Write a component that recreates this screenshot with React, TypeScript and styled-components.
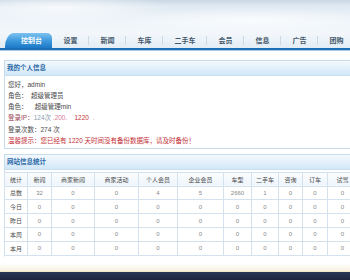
import React, { FC } from "react"
import { styled, createGlobalStyle } from "styled-components"

const GlobalStyle = createGlobalStyle`
  html, body {
    margin: 0;
    padding: 0;
    background: #ffffff;
    overflow: hidden;
  }
  body {
    font-family: "Liberation Sans", "Noto Sans CJK SC", sans-serif;
  }
`

const TABS = ["控制台", "设置", "新闻", "车库", "二手车", "会员", "信息", "广告", "团购"]

const COLUMNS = [
  { label: "统计", width: 23 },
  { label: "新闻", width: 24 },
  { label: "商家新闻", width: 43 },
  { label: "商家活动", width: 44 },
  { label: "个人会员", width: 39 },
  { label: "企业会员", width: 46 },
  { label: "车型", width: 28 },
  { label: "二手车", width: 27 },
  { label: "咨询", width: 24 },
  { label: "订车", width: 25 },
  { label: "试驾", width: 30 },
]

const ROWS = [
  { name: "总数", values: [32, 0, 0, 4, 5, 2660, 1, 0, 0, 0] },
  { name: "今日", values: [0, 0, 0, 0, 0, 0, 0, 0, 0, 0] },
  { name: "昨日", values: [0, 0, 0, 0, 0, 0, 0, 0, 0, 0] },
  { name: "本周", values: [0, 0, 0, 0, 0, 0, 0, 0, 0, 0] },
  { name: "本月", values: [0, 0, 0, 0, 0, 0, 0, 0, 0, 0] },
]

const App: FC = (): JSX.Element => {
  return (
    <Page>
      <GlobalStyle />

      <Header>
        <Nav>
          {TABS.map((t, i) => (
            <Tab key={t} $active={i === 0}>
              {t}
            </Tab>
          ))}
        </Nav>
      </Header>

      <Content>
        <Panel>
          <PanelTitle>我的个人信息</PanelTitle>
          <InfoList>
            <li>您好，admin</li>
            <li>角色：&nbsp;&nbsp;超级管理员</li>
            <li>角色：&nbsp;&nbsp;&nbsp;&nbsp;超级管理min</li>
            <li>
              <Tone $c="#9a4556">登录IP：</Tone>
              <Tone $c="#8c9db0">124次</Tone>
              <Tone $c="#d67a98">&nbsp;.200.</Tone>
              <Tone $c="#c53a3a">&nbsp;&nbsp;&nbsp;&nbsp;1220</Tone>
              <Tone $c="#aaa">&nbsp;&nbsp;.</Tone>
            </li>
            <li>登录次数：274 次</li>
            <li className="warn">
              温馨提示：您已经有 1220 天时间没有备份数据库，请及时备份！
            </li>
          </InfoList>
        </Panel>

        <Panel $gap>
          <PanelTitle>网站信息统计</PanelTitle>
          <StatsTable>
            <colgroup>
              {COLUMNS.map((c) => (
                <col key={c.label} style={{ width: c.width }} />
              ))}
            </colgroup>
            <thead>
              <tr>
                {COLUMNS.map((c) => (
                  <th key={c.label}>{c.label}</th>
                ))}
              </tr>
            </thead>
            <tbody>
              {ROWS.map((r) => (
                <tr key={r.name}>
                  <td className="name">{r.name}</td>
                  {r.values.map((v, i) => (
                    <td key={i}>{v}</td>
                  ))}
                </tr>
              ))}
            </tbody>
          </StatsTable>
        </Panel>
      </Content>

      <Shade />
      <Footer />
    </Page>
  )
}

const Page = styled.div`
  width: 350px;
  height: 280px;
  display: flex;
  flex-direction: column;
  overflow: hidden;
`

const Header = styled.div`
  height: 48px;
  flex: none;
  display: flex;
  align-items: flex-end;
  background:
    radial-gradient(ellipse 160px 22px at 60px 8px, rgba(255, 255, 255, 0.75), rgba(255, 255, 255, 0) 70%),
    radial-gradient(ellipse 200px 18px at 250px 20px, rgba(255, 255, 255, 0.7), rgba(255, 255, 255, 0) 70%),
    linear-gradient(#c9d7e3 0px, #dfe9f2 6px, #eef4f9 22px, #f3f7fb 33px, #e3edf5 48px);
  border-bottom: 2px solid #1f6fb6;
  box-shadow: 0 1px 0 #a9cbe8;
`

const Nav = styled.ul`
  display: flex;
  align-items: flex-end;
  margin: 0;
  padding: 0 0 0 5px;
  list-style: none;
  height: 15px;
`

const Tab = styled.li<{ $active?: boolean }>`
  position: relative;
  height: 15px;
  line-height: 15px;
  font-size: 7px;
  font-weight: bold;
  white-space: nowrap;
  color: ${(p) => (p.$active ? "#ffffff" : "#46596c")};
  padding: ${(p) => (p.$active ? "0 10px 0 16px" : "0 11.5px")};
  background: ${(p) =>
    p.$active ? "linear-gradient(#7cc2f0, #3b97dc 55%, #1d78c6)" : "transparent"};
  border-radius: ${(p) => (p.$active ? "9px 5px 0 0 / 14px 5px 0 0" : "0")};

  &::after {
    content: "";
    position: absolute;
    right: 0;
    top: 3px;
    width: 1px;
    height: 9px;
    background: ${(p) => (p.$active ? "transparent" : "#cbd9e5")};
  }
`

const Content = styled.div`
  padding: 10px 0 0 4px;
  display: flex;
  flex-direction: column;
`

const Panel = styled.section<{ $gap?: boolean }>`
  width: 360px;
  margin-top: ${(p) => (p.$gap ? "5px" : "0")};
  border: 1px solid ${(p) => (p.$gap ? "transparent" : "#c8ddec")};
  border-left-color: #c8ddec;
  border-top-color: #c8ddec;
`

const PanelTitle = styled.h3`
  margin: 0;
  height: 14px;
  line-height: 14px;
  padding-left: 2px;
  font-size: 6.5px;
  font-weight: bold;
  color: #2a68a8;
  background: linear-gradient(#f3f9fd, #d2e8f8);
  border-bottom: 1px solid #c8ddec;
`

const InfoList = styled.ul`
  margin: 0;
  padding: 2.5px 3px 1.5px;
  list-style: none;

  > li {
    height: 11.3px;
    line-height: 11.3px;
    font-size: 6.5px;
    color: #4a4a4a;
    white-space: nowrap;
  }

  > li.warn {
    color: #c23036;
  }
`

const Tone = styled.span<{ $c: string }>`
  color: ${(p) => p.$c};
`

const StatsTable = styled.table`
  margin-top: 2px;
  margin-left: -1px;
  border-collapse: collapse;
  table-layout: fixed;
  width: 353px;

  th,
  td {
    border: 1px solid #d3e2ee;
    height: 12.8px;
    padding: 0;
    text-align: center;
    font-size: 6px;
    white-space: nowrap;
  }

  th {
    font-weight: normal;
    color: #4a4a4a;
    background: linear-gradient(#fbfdff, #eef5fb);
  }

  td {
    color: #888888;
  }

  td.name {
    color: #4a4a4a;
  }
`

const Shade = styled.div`
  flex: 1;
  min-height: 10px;
  background: linear-gradient(#ffffff 0%, #ffffff 40%, #f8f3e2 90%, #efe3b8 100%);
`

const Footer = styled.div`
  height: 8px;
  flex: none;
  background: linear-gradient(#2a3856, #1c2640);
`

export default App
